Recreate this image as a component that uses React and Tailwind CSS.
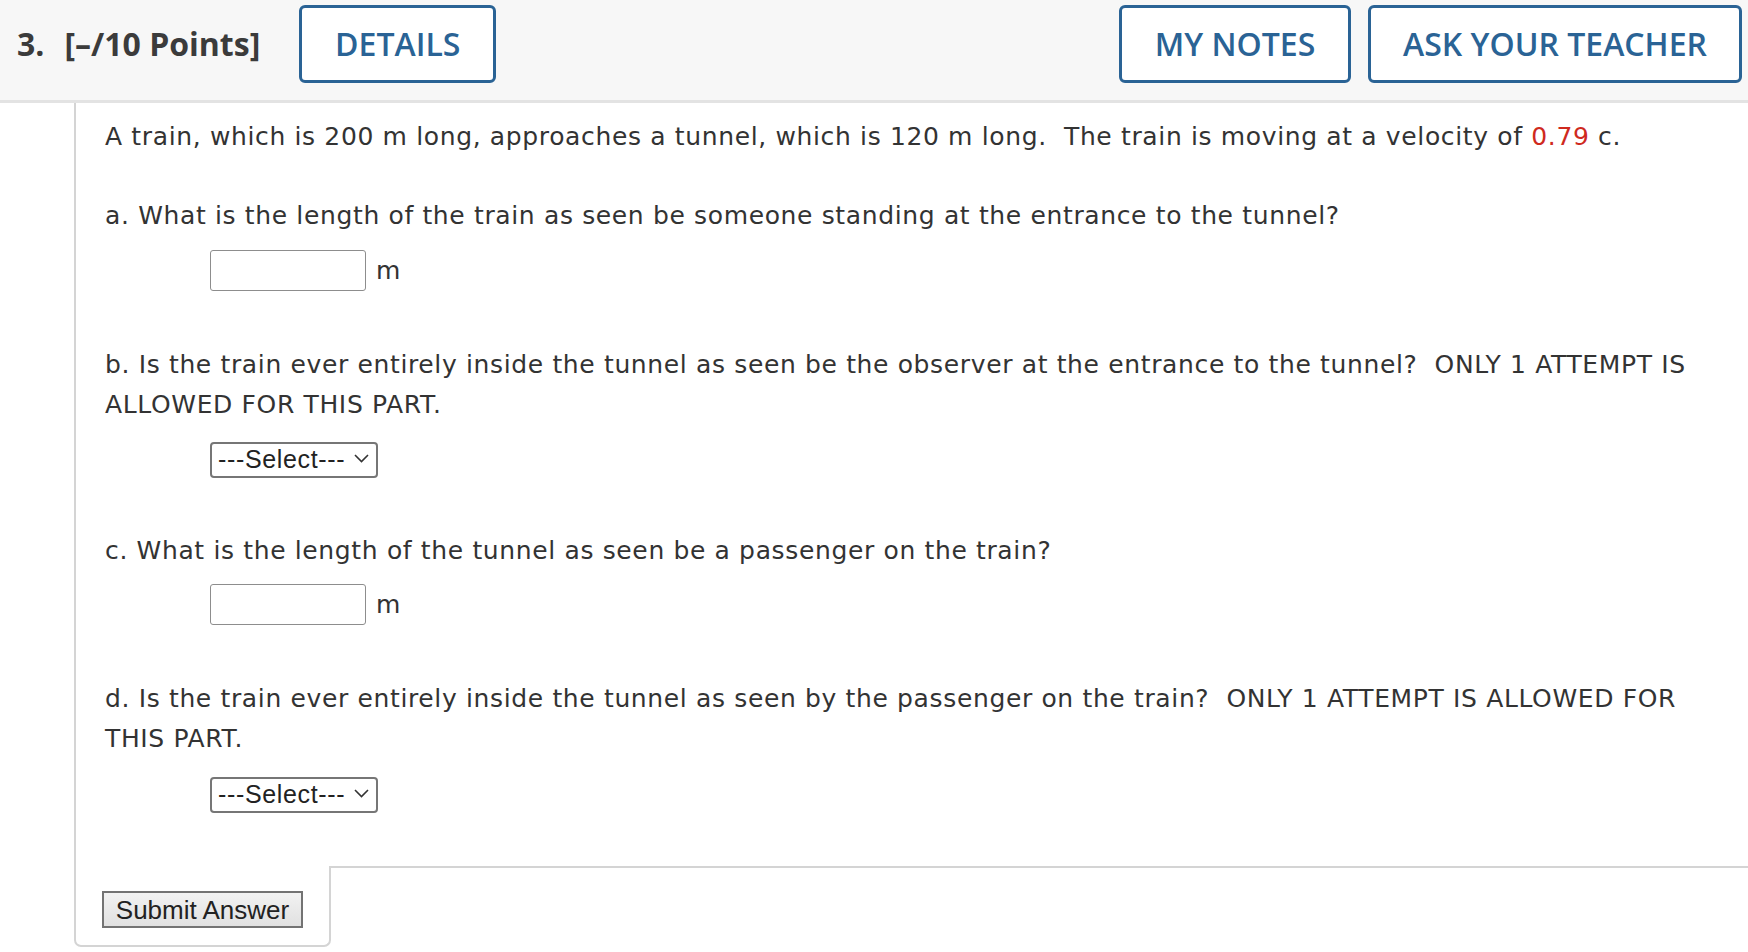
import React from 'react';

const body = { fontFamily: 'Verdana, "DejaVu Sans", sans-serif' };
const ui = { fontFamily: '"Liberation Sans", Arial, sans-serif' };
const head = { fontFamily: '"Open Sans", sans-serif' };

function HeaderButton({ children, className = '' }) {
  return (
    <button
      style={head}
      className={`h-[78px] border-[3px] border-[#2a6395] rounded-[6px] bg-white text-[#2a6395] text-[32px] font-semibold ${className}`}
    >
      {children}
    </button>
  );
}

function AnswerBox() {
  return (
    <div className="flex items-center ml-[105px]">
      <input
        type="text"
        className="w-[156px] h-[41px] border border-[#8d8d8d] rounded-[3px] bg-white"
      />
      <span className="ml-[10px] text-[25px] text-[#333]" style={body}>m</span>
    </div>
  );
}

function SelectBox() {
  return (
    <div className="ml-[105px] relative w-[168px] h-[36px]">
      <select
        style={ui}
        className="appearance-none w-full h-full border-2 border-[#767676] rounded-[4px] bg-white pl-[6px] text-[25px] leading-none text-[#222]"
        defaultValue=""
      >
        <option value="">---Select---</option>
        <option value="yes">Yes</option>
        <option value="no">No</option>
      </select>
      <svg
        className="absolute right-[9px] top-[14px] pointer-events-none"
        width="15"
        height="9"
        viewBox="0 0 15 9"
        fill="none"
        stroke="#333"
        strokeWidth="1.6"
      >
        <path d="M1 1 L7.5 7.5 L14 1" />
      </svg>
    </div>
  );
}

export default function App() {
  return (
    <div className="w-[1748px] h-[952px] bg-white overflow-hidden">
      {/* question header */}
      <div className="h-[103px] bg-[#f7f7f7] border-b-[3px] border-[#e3e3e3] flex items-center pb-[12px]">
        <div style={head} className="ml-[17px] text-[32px] font-bold text-[#3b3b3b] flex items-center">
          <span>3.</span>
          <span className="ml-[20px]">[–/10 Points]</span>
        </div>
        <HeaderButton className="ml-[39px] w-[197px]">DETAILS</HeaderButton>
        <div className="flex-1" />
        <HeaderButton className="w-[232px]">MY NOTES</HeaderButton>
        <HeaderButton className="ml-[17px] mr-[6px] w-[374px]">ASK YOUR TEACHER</HeaderButton>
      </div>

      <div className="ml-[74px]">
        <div style={body} className="border-l-2 border-[#d4d4d4] pl-[29px] pt-[14px] pb-[55px] text-[25px] tracking-[0.64px] leading-[40px] text-[#333]">
          <p className="mb-[39px]">
            A train, which is 200 m long, approaches a tunnel, which is 120 m long.&nbsp; The train is moving at a velocity of <span className="text-[#cf2a1e]">0.79</span> c.
          </p>

          <p>a. What is the length of the train as seen be someone standing at the entrance to the tunnel?</p>
          <div className="mt-[14px]">
            <AnswerBox />
          </div>

          <p className="mt-[54px]">
            b. Is the train ever entirely inside the tunnel as seen be the observer at the entrance to the tunnel?&nbsp; ONLY 1 ATTEMPT IS
            <br />
            ALLOWED FOR THIS PART.
          </p>
          <div className="mt-[15px]">
            <SelectBox />
          </div>

          <p className="mt-[55px]">c. What is the length of the tunnel as seen be a passenger on the train?</p>
          <div className="mt-[13px]">
            <AnswerBox />
          </div>

          <p className="mt-[54px]">
            d. Is the train ever entirely inside the tunnel as seen by the passenger on the train?&nbsp; ONLY 1 ATTEMPT IS ALLOWED FOR
            <br />
            THIS PART.
          </p>
          <div className="mt-[16px]">
            <SelectBox />
          </div>
        </div>

        <div className="flex items-start">
          <div className="w-[257px] h-[81px] border-2 border-t-0 border-[#d4d4d4] rounded-b-[7px] pl-[26px] pt-[25px]">
            <button
              style={ui}
              className="w-[201px] h-[37px] border-2 border-[#737373] bg-gradient-to-b from-[#f2f2f2] to-[#e1e1e1] text-[26px] leading-none text-[#222]"
            >
              Submit Answer
            </button>
          </div>
          <div className="flex-1 border-t-2 border-[#d4d4d4]" />
        </div>
      </div>
    </div>
  );
}
